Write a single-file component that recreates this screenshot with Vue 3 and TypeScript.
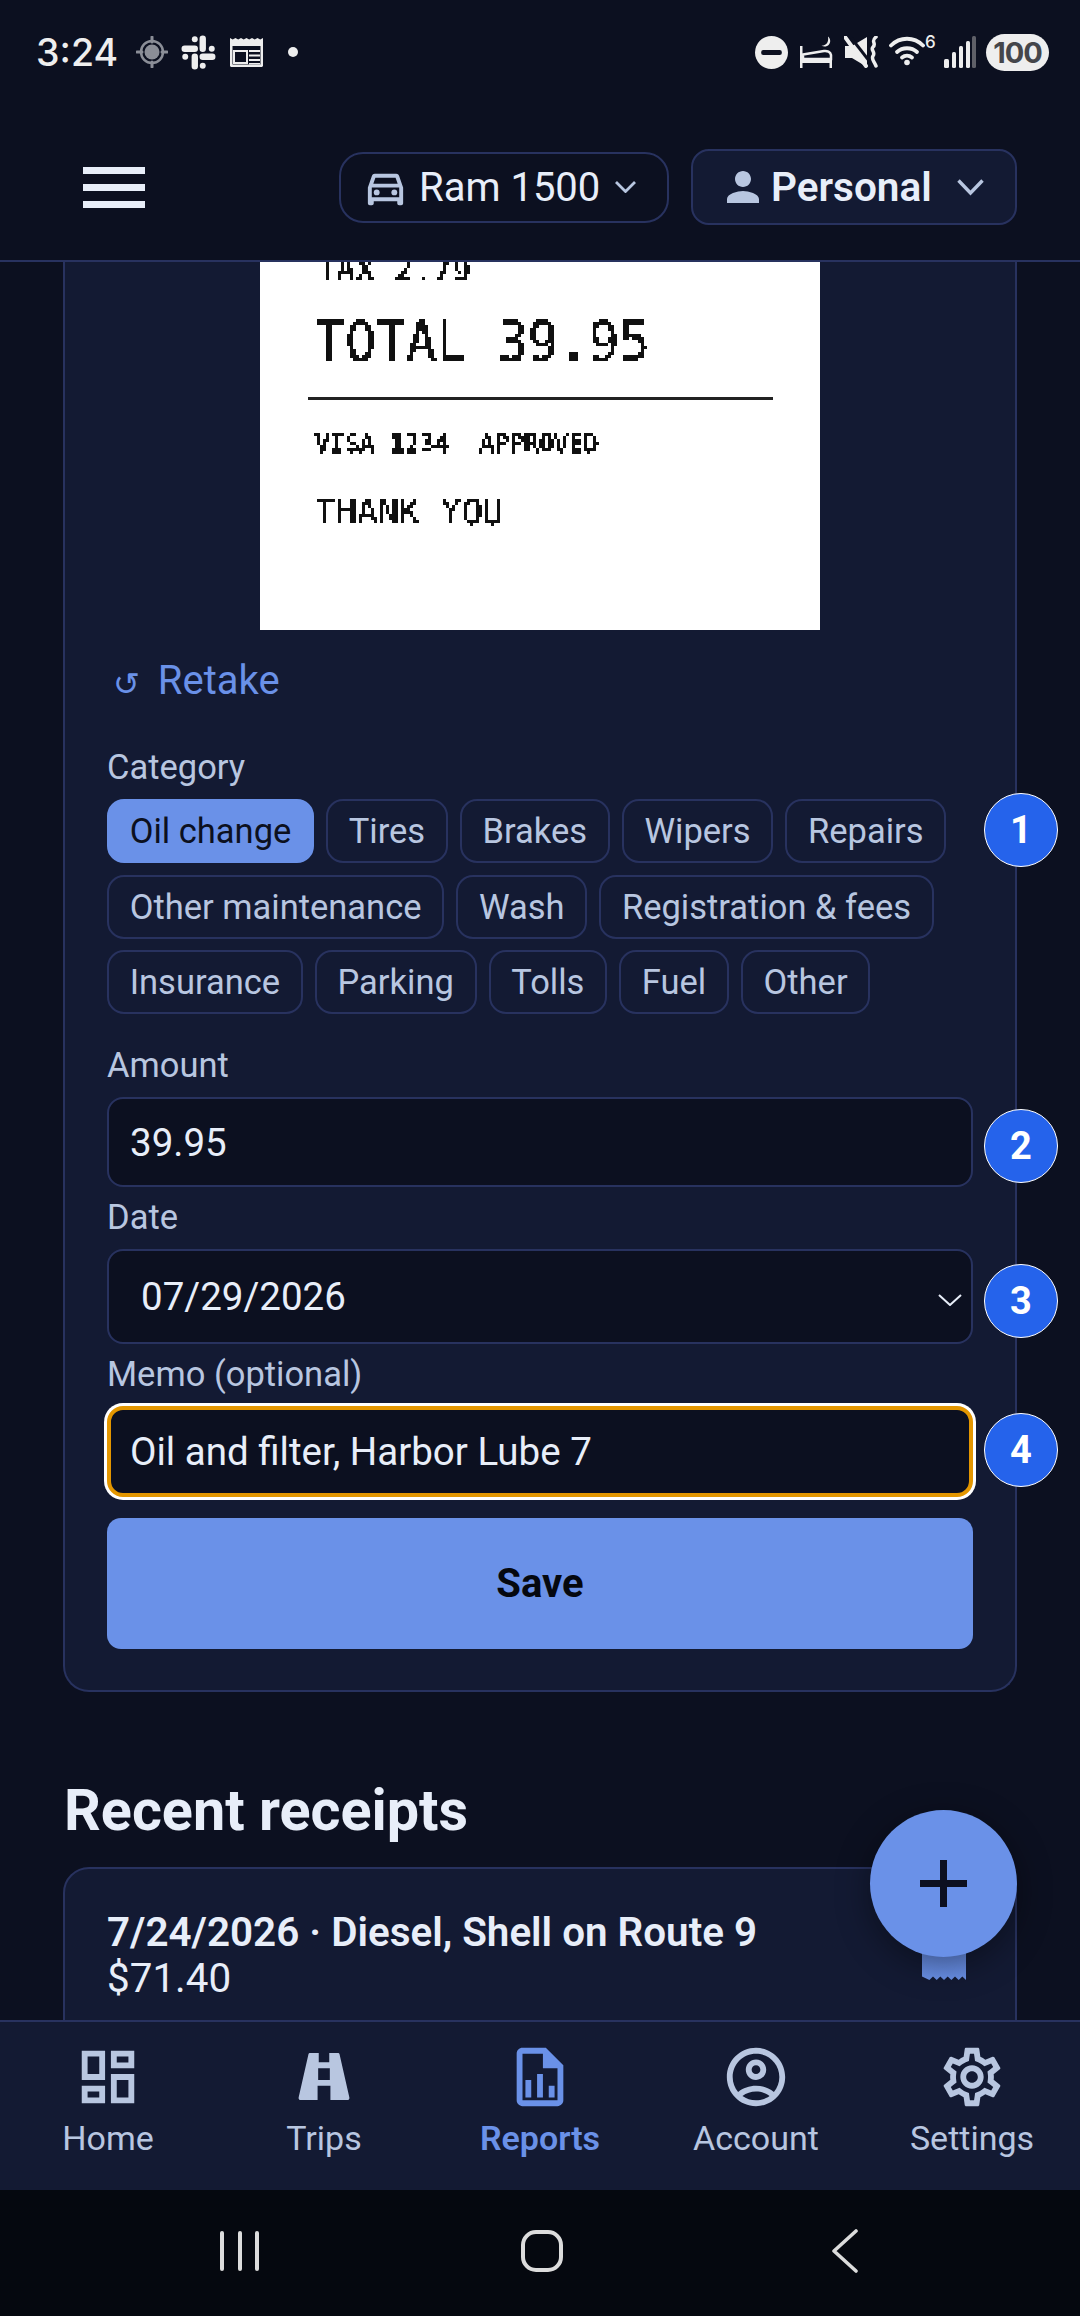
<script setup lang="ts">
interface NavItem {
  label: string
  active?: boolean
  paths: string[]
}

const categories = [
  'Oil change',
  'Tires',
  'Brakes',
  'Wipers',
  'Repairs',
  'Other maintenance',
  'Wash',
  'Registration & fees',
  'Insurance',
  'Parking',
  'Tolls',
  'Fuel',
  'Other',
]

// tops are relative to the card, which starts right under the header
const badges = [
  { n: 1, top: 531 },
  { n: 2, top: 847 },
  { n: 3, top: 1002 },
  { n: 4, top: 1151 },
]

const navItems: NavItem[] = [
  {
    label: 'Home',
    paths: [
      'M19 5v2h-4V5h4M9 5v6H5V5h4m10 8v6h-4v-6h4M9 17v2H5v-2h4M21 3h-8v6h8V3zM11 3H3v10h8V3zm10 8h-8v10h8V11zm-10 4H3v6h8v-6z',
    ],
  },
  {
    label: 'Trips',
    paths: [
      'M7.200 3.800H10.200V6.900H13.800V3.800H16.800C17.100 3.800 17.300 4 17.350 4.300L20.700 19C20.800 19.500 20.500 19.900 20 19.900H14.200V15H9.800V19.900H4C3.500 19.900 3.200 19.500 3.300 19L6.650 4.300C6.700 4 6.900 3.800 7.200 3.800ZM10 9H14V13H10Z',
    ],
  },
  {
    label: 'Reports',
    active: true,
    paths: [
      'M14 2H6c-1.100 0-2 .9-2 2v16c0 1.100.9 2 2 2h12c1.100 0 2-.9 2-2V8l-6-6zM6 20V4h7v5h5v11H6z',
      'M7 13h2v6H7zM11 11h2v8h-2zM15 15h2v4h-2z',
    ],
  },
  {
    label: 'Account',
    paths: [
      'M12 2C6.480 2 2 6.480 2 12s4.480 10 10 10 10-4.480 10-10S17.520 2 12 2zM7.350 18.500C8.660 17.560 10.260 17 12 17s3.340.56 4.650 1.500C15.340 19.440 13.740 20 12 20s-3.340-.56-4.650-1.500zm10.790-1.380C16.450 15.800 14.320 15 12 15s-4.450.8-6.140 2.120C4.700 15.730 4 13.950 4 12c0-4.420 3.580-8 8-8s8 3.580 8 8c0 1.950-.7 3.730-1.860 5.120z',
      'M12 6c-1.930 0-3.500 1.570-3.500 3.500S10.070 13 12 13s3.500-1.570 3.500-3.500S13.930 6 12 6zm0 5c-.83 0-1.500-.67-1.500-1.500S11.170 8 12 8s1.500.67 1.500 1.500S12.830 11 12 11z',
    ],
  },
  {
    label: 'Settings',
    paths: [
      'M19.430 12.980c.04-.32.07-.64.07-.98 0-.34-.03-.66-.07-.98l2.110-1.650c.19-.15.24-.42.12-.64l-2-3.460c-.09-.16-.26-.25-.44-.25-.06 0-.12.01-.17.03l-2.490 1c-.52-.4-1.080-.73-1.690-.98l-.38-2.650C14.460 2.180 14.250 2 14 2h-4c-.25 0-.46.18-.49.42l-.38 2.650c-.61.25-1.170.59-1.690.98l-2.490-1c-.06-.02-.12-.03-.18-.03-.17 0-.34.09-.43.25l-2 3.460c-.13.22-.07.49.12.64l2.110 1.650c-.04.32-.07.65-.07.98 0 .33.03.66.07.98l-2.110 1.650c-.19.15-.24.42-.12.64l2 3.460c.09.16.26.25.44.25.06 0 .12-.01.17-.03l2.490-1c.52.4 1.080.73 1.690.98l.38 2.650c.03.24.24.42.49.42h4c.25 0 .46-.18.49-.42l.38-2.650c.61-.25 1.170-.59 1.690-.98l2.490 1c.06.02.12.03.18.03.17 0 .34-.09.43-.25l2-3.460c.12-.22.07-.49-.12-.64l-2.110-1.650zm-1.980-1.710c.04.31.05.52.05.73 0 .21-.02.43-.05.73l-.14 1.130.89.7 1.080.84-.7 1.210-1.270-.51-1.040-.42-.9.68c-.43.32-.84.56-1.250.73l-1.060.43-.16 1.130-.2 1.350h-1.400l-.19-1.350-.16-1.130-1.060-.43c-.43-.18-.83-.41-1.230-.71l-.91-.7-1.060.43-1.270.51-.7-1.210 1.080-.84.89-.7-.14-1.130c-.03-.31-.05-.54-.05-.74s.02-.43.05-.73l.14-1.130-.89-.7-1.080-.84.7-1.210 1.270.51 1.040.42.9-.68c.43-.32.84-.56 1.250-.73l1.060-.43.16-1.130.2-1.350h1.390l.19 1.350.16 1.130 1.060.43c.43.18.83.41 1.230.71l.91.7 1.060-.43 1.270-.51.7 1.210-1.070.85-.89.7.14 1.130zM12 8c-2.210 0-4 1.790-4 4s1.790 4 4 4 4-1.790 4-4-1.790-4-4-4zm0 6c-1.100 0-2-.9-2-2s.9-2 2-2 2 .9 2 2-.9 2-2 2z',
    ],
  },
]
</script>

<template>
  <div class="phone">
    <svg class="defs" width="0" height="0" aria-hidden="true">
      <!-- the printed receipt is a low-res bitmap in the reference, so block the text up -->
      <filter id="crisp" x="0" y="0" width="100%" height="100%" color-interpolation-filters="sRGB">
        <feFlood x="1" y="1" width="1" height="1" flood-color="#000" />
        <feComposite width="3" height="3" />
        <feTile result="grid" />
        <feComposite in="SourceGraphic" in2="grid" operator="in" />
        <feMorphology operator="dilate" radius="1" />
        <feComponentTransfer>
          <feFuncA type="discrete" tableValues="0 1 1 1" />
        </feComponentTransfer>
      </filter>
    </svg>

    <header class="top">
      <div class="status">
        <span class="time">3:24</span>
        <svg class="st st-loc" width="32" height="32" viewBox="0 0 32 32">
          <circle cx="16" cy="16" r="7.500" fill="#8b8e97" />
          <circle cx="16" cy="16" r="11" fill="none" stroke="#8b8e97" stroke-width="2.500" />
          <path d="M16 1v5M16 26v5M1 16h5M26 16h5" stroke="#8b8e97" stroke-width="3" stroke-linecap="round" />
        </svg>
        <svg class="st st-slack" width="35" height="35" viewBox="0 0 33 33" fill="#eeeeee" stroke="#eeeeee" stroke-linecap="round">
          <g stroke-width="6" fill="none">
            <path d="M3.500 13h9.500M20.500 3.500V13M29.500 20.500H20.500M13 29.500V20.500" />
          </g>
          <circle cx="13" cy="4" r="2.800" stroke="none" />
          <circle cx="29" cy="13" r="2.800" stroke="none" />
          <circle cx="20.500" cy="29" r="2.800" stroke="none" />
          <circle cx="4" cy="20.500" r="2.800" stroke="none" />
        </svg>
        <svg class="st st-news" width="33" height="30" viewBox="0 0 33 30" fill="#eeeeee">
          <path d="M0 1l2.700 1.500L5.500 1l2.700 1.500L11 1l2.700 1.500L16.500 1l2.700 1.500L22 1l2.700 1.500L27.500 1l2.700 1.500L33 1v27.500c0 .8-.7 1.500-1.500 1.500h-30C.7 30 0 29.300 0 28.500zM2.500 9v18.500h28V9z" fill-rule="evenodd" />
          <path d="M3 13h15v14H3zM5 15v10h11V15zM19 13h11v2H19zM19 17.500h11v2H19zM19 22h11v2H19zM19 26h11v1.500H19z" fill-rule="evenodd" />
        </svg>
        <span class="st-dot"></span>

        <div class="status-right">
          <svg width="33" height="33" viewBox="0 0 32 32">
            <circle cx="16" cy="16" r="16" fill="#eeeeee" />
            <rect x="6" y="13.500" width="20" height="5" rx="2" fill="#0c1020" />
          </svg>
          <svg class="st-bed" width="34" height="32" viewBox="0 0 34 32" fill="#eeeeee">
            <path d="M1 10h2.500v14H33v8h-2.500v-5H3.500v5H1z" />
            <path d="M4 18.500l21-3.500c3-.5 6.500 1 7 4V23H4z" fill="none" stroke="#eeeeee" stroke-width="2.500" />
            <path d="M29 .5c2.500 2 3 5.500 1 8-2 2.300-5 2.500-7.500 1.200 2.500-.2 5-1.200 6-3.500.8-1.800.8-3.700.5-5.700z" />
          </svg>
          <svg class="st-mute" width="35" height="32" viewBox="0 0 35 32" fill="#eeeeee">
            <path d="M1 10h7L23 1v30L8 22H1z" />
            <path d="M5-1l21 27" stroke="#0c1020" stroke-width="3" />
            <path d="M1 1l21 29" stroke="#eeeeee" stroke-width="4" stroke-linecap="round" />
            <path d="M32 1c-6 5 1 6-3 10-3 3 3 5-0 9-2 3 1 5 3 10" fill="none" stroke="#eeeeee" stroke-width="3.500" stroke-linecap="round" />
          </svg>
          <span class="wifi">
            <svg width="36" height="30" viewBox="0 0 36 30" fill="none" stroke="#eeeeee" stroke-width="3.800" stroke-linecap="round">
              <path d="M2 9.500C11 .5 25 .5 34 9.500" />
              <path d="M8 16c5.500-5 14.500-5 20 0" />
              <path d="M13 21.500c3-2.500 7-2.500 10 0" />
              <circle cx="18" cy="26.500" r="2.800" fill="#eeeeee" stroke="none" />
            </svg>
            <span class="wifi-six">6</span>
          </span>
          <svg class="st-signal" width="32" height="32" viewBox="0 0 32 32">
            <rect x="0" y="23" width="5" height="9" rx="1.500" fill="#eeeeee" />
            <rect x="8" y="16" width="4" height="16" rx="1.500" fill="#eeeeee" />
            <rect x="15" y="10" width="4" height="22" rx="1.500" fill="#eeeeee" />
            <rect x="22" y="5" width="4" height="27" rx="1.500" fill="#eeeeee" />
            <rect x="28" y="0" width="4" height="32" rx="1.500" fill="#5f6068" />
          </svg>
          <span class="battery">100</span>
        </div>
      </div>

      <div class="toolbar">
        <button class="burger" aria-label="Menu"><span></span><span></span><span></span></button>
        <div class="switchers">
          <button class="vehicle">
            <svg class="car" width="47" height="47" viewBox="0 0 24 24" fill="#b8c6e0">
              <path d="M18.920 6.010C18.720 5.420 18.160 5 17.500 5h-11c-.66 0-1.210.42-1.420 1.010L3 12v8c0 .55.45 1 1 1h1c.55 0 1-.45 1-1v-1h12v1c0 .55.45 1 1 1h1c.55 0 1-.45 1-1v-8l-2.080-5.990zM6.850 7h10.290l1.080 3.110H5.770L6.850 7zM19 17H5v-5h14v5z" />
              <circle cx="7.500" cy="14.500" r="1.500" />
              <circle cx="16.500" cy="14.500" r="1.500" />
            </svg>
            <span>Ram 1500</span>
            <svg class="chev-s" width="21" height="12" viewBox="0 0 21 12" fill="none" stroke="#b8c6e0" stroke-width="2.800">
              <path d="M1 1l9.500 9.500L20 1" />
            </svg>
          </button>
          <button class="profile">
            <svg width="48" height="48" viewBox="0 0 24 24" fill="#b8c6e0">
              <path d="M12 12c2.210 0 4-1.790 4-4s-1.790-4-4-4-4 1.790-4 4 1.790 4 4 4zm0 2c-2.670 0-8 1.340-8 4v2h16v-2c0-2.660-5.330-4-8-4z" />
            </svg>
            <span>Personal</span>
            <svg class="chev-l" width="27" height="17" viewBox="0 0 27 17" fill="none" stroke="#b8c6e0" stroke-width="3.400">
              <path d="M1.500 1.500l12 12.500 12-12.500" />
            </svg>
          </button>
        </div>
      </div>
    </header>

    <main class="content">
      <section class="card">
        <div class="receipt">
          <div class="r-print">
            <div class="r-tax">TAX 2.79</div>
            <div class="r-total">TOTAL 39.95</div>
            <div class="r-rule"></div>
            <div class="r-visa">VISA 1234&nbsp;&nbsp;APPROVED</div>
            <div class="r-thanks">THANK YOU</div>
          </div>
        </div>

        <button class="retake"><span class="retake-icon">↺</span>Retake</button>

        <label class="lbl lbl-cat">Category</label>
        <div class="chips">
          <button v-for="(c, i) in categories" :key="c" class="chip" :class="{ on: i === 0 }">{{ c }}</button>
        </div>

        <label class="lbl lbl-amount">Amount</label>
        <input class="field amount" value="39.95" />

        <label class="lbl">Date</label>
        <div class="field date">
          <span>07/29/2026</span>
          <svg width="24" height="12" viewBox="0 0 24 12" fill="none" stroke="#e8eef9" stroke-width="2">
            <path d="M1 1l11 10L23 1" />
          </svg>
        </div>

        <label class="lbl">Memo (optional)</label>
        <input class="field memo" value="Oil and filter, Harbor Lube 7" />

        <button class="save">Save</button>

        <span v-for="b in badges" :key="b.n" class="badge" :style="{ top: b.top + 'px' }">{{ b.n }}</span>
      </section>

      <h2 class="recent-title">Recent receipts</h2>
      <section class="recent">
        <div class="recent-name">7/24/2026 · Diesel, Shell on Route 9</div>
        <div class="recent-sum">$71.40</div>
      </section>
    </main>

    <svg class="ribbon" width="44" height="80" viewBox="0 0 44 80">
      <defs>
        <linearGradient id="rib" x1="0" y1="0" x2="0" y2="1">
          <stop offset="0.7" stop-color="#6388dc" />
          <stop offset="1" stop-color="#6a91e8" />
        </linearGradient>
      </defs>
      <path d="M0 0h44v80l-3.700-3.500-3.600 3.500-3.700-3.500-3.600 3.500-3.700-3.500-3.700 3.500-3.700-3.500-3.600 3.500-3.700-3.500-3.600 3.500L0 76.500z" fill="url(#rib)" />
    </svg>
    <button class="fab" aria-label="Add">
      <svg width="47" height="47" viewBox="0 0 47 47" fill="#0c1020">
        <path d="M20 0h7v20h20v7H27v20h-7V27H0v-7h20z" />
      </svg>
    </button>

    <nav class="tabs">
      <button v-for="item in navItems" :key="item.label" class="tab" :class="{ active: item.active }">
        <svg width="70" height="70" viewBox="0 0 24 24" fill="currentColor">
          <path v-for="d in item.paths" :key="d" :d="d" fill-rule="evenodd" />
        </svg>
        <span>{{ item.label }}</span>
      </button>
    </nav>

    <div class="sysnav">
      <div class="recents"><i></i><i></i><i></i></div>
      <div class="home-btn"></div>
      <svg width="26" height="44" viewBox="0 0 26 44" fill="none" stroke="#dcdcdc" stroke-width="3.600" stroke-linecap="round" stroke-linejoin="round">
        <path d="M24 2L2 22l22 20" />
      </svg>
    </div>
  </div>
</template>

<style scoped>
.phone {
  position: relative;
  width: 1080px;
  height: 2316px;
  overflow: hidden;
  display: flex;
  flex-direction: column;
  background: #0c1020;
  color: #e8eef9;
  font-family: Roboto, "Noto Sans", sans-serif;
}

button {
  font-family: inherit;
  border: none;
  background: none;
  color: inherit;
  padding: 0;
}

.defs {
  position: absolute;
}

.top {
  flex: none;
  height: 262px;
  box-sizing: border-box;
  border-bottom: 2px solid #28325f;
  background: #0c1020;
}

.status {
  height: 104px;
  display: flex;
  align-items: center;
  padding: 0 31px 0 36px;
}

.time {
  font-family: Inter, Roboto, sans-serif;
  font-size: 37.500px;
  font-weight: 500;
  color: #eeeeee;
  width: 100px;
}

.st-slack {
  margin-left: 13px;
}

.st-news {
  margin-left: 14px;
}

.st-dot {
  width: 10px;
  height: 10px;
  border-radius: 50%;
  background: #eeeeee;
  margin-left: 25px;
}

.status-right {
  margin-left: auto;
  display: flex;
  align-items: center;
  gap: 11px;
}

.wifi {
  position: relative;
  width: 44px;
  height: 32px;
  margin-left: -1px;
}

.wifi-six {
  position: absolute;
  left: 36px;
  top: -4px;
  font-family: Inter, sans-serif;
  font-size: 17px;
  font-weight: 500;
  color: #eeeeee;
}

.battery {
  width: 63px;
  height: 37px;
  border-radius: 19px;
  background: #eeeeee;
  color: #45464b;
  font-family: Inter, sans-serif;
  font-size: 29px;
  font-weight: 700;
  letter-spacing: -1px;
  display: flex;
  align-items: center;
  justify-content: center;
  margin-left: -1px;
}

.toolbar {
  height: 156px;
  box-sizing: border-box;
  padding: 10px 63px 0 83px;
  display: flex;
  align-items: center;
  justify-content: space-between;
}

.burger {
  width: 62px;
  display: flex;
  flex-direction: column;
  gap: 10px;
}

.burger span {
  display: block;
  height: 7px;
  background: #e8eef9;
}

.switchers {
  display: flex;
  align-items: center;
  gap: 22px;
}

.vehicle {
  width: 330px;
  height: 71px;
  box-sizing: border-box;
  border: 2px solid #28325f;
  border-radius: 24px;
  display: flex;
  align-items: center;
  padding-left: 21px;
  font-size: 40px;
  color: #e8eef9;
}

.vehicle span {
  margin-left: 10px;
}

.chev-s {
  margin-left: 15px;
}

.profile {
  width: 326px;
  height: 76px;
  box-sizing: border-box;
  border: 2px solid #28325f;
  border-radius: 18px;
  background: #131a33;
  display: flex;
  align-items: center;
  padding-left: 26px;
  font-size: 40.500px;
  font-weight: 600;
  color: #e8eef9;
}

.profile span {
  margin-left: 4px;
}

.chev-l {
  margin-left: 25px;
}

.content {
  flex: 1;
  min-height: 0;
  overflow: hidden;
  padding: 0 63px;
}

.card {
  position: relative;
  box-sizing: border-box;
  height: 1430px;
  background: #131a33;
  border: 2px solid #28325f;
  border-top: none;
  border-radius: 0 0 26px 26px;
  padding: 0 43px 0 42px;
}

.receipt {
  width: 560px;
  height: 368px;
  margin: 0 0 0 153px;
  background: #ffffff;
  overflow: hidden;
  color: #111111;
  font-family: "DejaVu Sans Mono", "Liberation Mono", monospace;
}

.r-print {
  filter: url(#crisp);
  padding: 0 46px 0 55px;
  margin-top: -12px;
  white-space: pre;
}

.r-tax {
  font-size: 32px;
  line-height: 40px;
  margin-left: 2px;
}

.r-total {
  font-size: 50.500px;
  line-height: 50px;
  margin-top: 27px;
  transform: scaleY(1.08);
  transform-origin: left center;
}

.r-rule {
  height: 3px;
  background: #222222;
  margin: 30px 0 0 -8px;
  width: 466px;
}

.r-visa {
  font-size: 24.800px;
  line-height: 24px;
  margin-top: 32px;
  -webkit-text-stroke: 0.5px #111111;
}

.r-thanks {
  font-size: 34.800px;
  line-height: 36px;
  margin-top: 38px;
}

.retake {
  display: flex;
  align-items: center;
  height: 60px;
  margin-top: 20px;
  margin-left: 6px;
  font-size: 40px;
  color: #6a91e8;
}

.retake-icon {
  font-family: "DejaVu Sans", sans-serif;
  font-size: 32px;
  margin: 8px 18px 0 0;
}

.lbl {
  display: block;
  height: 40px;
  line-height: 40px;
  font-size: 34.500px;
  color: #b8c6e0;
  margin: 10px 0 12px;
}

.lbl-cat {
  margin: 37px 0 12px;
}

.lbl-amount {
  margin-top: 31px;
}

.chips {
  display: flex;
  flex-wrap: wrap;
  gap: 11.500px 12px;
  width: 865px;
}

.chip {
  height: 64px;
  box-sizing: border-box;
  border: 2px solid #28325f;
  border-radius: 17px;
  padding: 0 20.700px;
  font-size: 34.500px;
  color: #b8c6e0;
}

.chip.on {
  background: #6a91e8;
  border-color: #6a91e8;
  color: #0c1020;
}

.field {
  display: flex;
  align-items: center;
  width: 866px;
  height: 90px;
  box-sizing: border-box;
  background: #0c1020;
  border: 2px solid #28325f;
  border-radius: 16px;
  padding: 0 21px;
  font-family: inherit;
  font-size: 38.500px;
  color: #e8eef9;
  outline: none;
}

.date {
  height: 95px;
  padding: 0 9px 0 32px;
  justify-content: space-between;
}

.date svg {
  margin-top: 6px;
}

.memo {
  height: 91px;
  border: 4.500px solid #e39600;
  box-shadow: 0 0 0 3px #ffffff;
  padding: 0 19px;
}

.save {
  display: block;
  width: 866px;
  height: 131px;
  margin-top: 21px;
  border-radius: 14px;
  background: #6a91e8;
  color: #05080f;
  font-size: 40px;
  font-weight: 700;
}

.badge {
  position: absolute;
  left: 919px;
  width: 74px;
  height: 74px;
  box-sizing: border-box;
  border: 1.500px solid #ffffff;
  border-radius: 50%;
  background: #2563eb;
  color: #ffffff;
  font-size: 38px;
  font-weight: 700;
  display: flex;
  align-items: center;
  justify-content: center;
}

.recent-title {
  margin: 89px 0 0 1px;
  height: 60px;
  line-height: 60px;
  font-size: 57.500px;
  font-weight: 700;
  color: #e8eef9;
}

.recent {
  margin-top: 26px;
  box-sizing: border-box;
  height: 240px;
  background: #131a33;
  border: 2px solid #28325f;
  border-radius: 26px;
  padding: 41px 42px;
  font-size: 40.400px;
  line-height: 46px;
}

.recent-name {
  font-weight: 600;
}

.ribbon {
  position: absolute;
  left: 922px;
  top: 1900px;
}

.fab {
  position: absolute;
  left: 870px;
  top: 1810px;
  width: 147px;
  height: 147px;
  border-radius: 50%;
  background: #6a91e8;
  box-shadow: 0 8px 34px rgba(0, 0, 0, 0.4);
  display: flex;
  align-items: center;
  justify-content: center;
}

.tabs {
  position: relative;
  flex: none;
  height: 170px;
  box-sizing: border-box;
  display: grid;
  grid-template-columns: repeat(5, 216px);
  background: #131a33;
  border-top: 2px solid #28325f;
}

.tab {
  display: flex;
  flex-direction: column;
  align-items: center;
  padding-top: 20px;
  font-size: 34px;
  color: #b8c6e0;
}

.tab svg {
  display: block;
}

.tab span {
  margin-top: 4px;
  line-height: 44px;
}

.tab.active {
  color: #6a91e8;
  font-weight: 600;
}

.sysnav {
  flex: none;
  height: 126px;
  box-sizing: border-box;
  background: #05080f;
  display: flex;
  align-items: flex-start;
  padding: 39px 222px 0 220px;
  justify-content: space-between;
}

.recents {
  display: flex;
  gap: 13.500px;
  margin-top: 2px;
}

.recents i {
  display: block;
  width: 4px;
  height: 40px;
  border-radius: 2px;
  background: #dcdcdc;
}

.home-btn {
  width: 42px;
  height: 42px;
  box-sizing: border-box;
  border: 4px solid #dcdcdc;
  border-radius: 15px;
  margin: 1px 7px 0 0;
}
</style>

<style>
html,
body {
  margin: 0;
  background: #0c1020;
}
</style>
